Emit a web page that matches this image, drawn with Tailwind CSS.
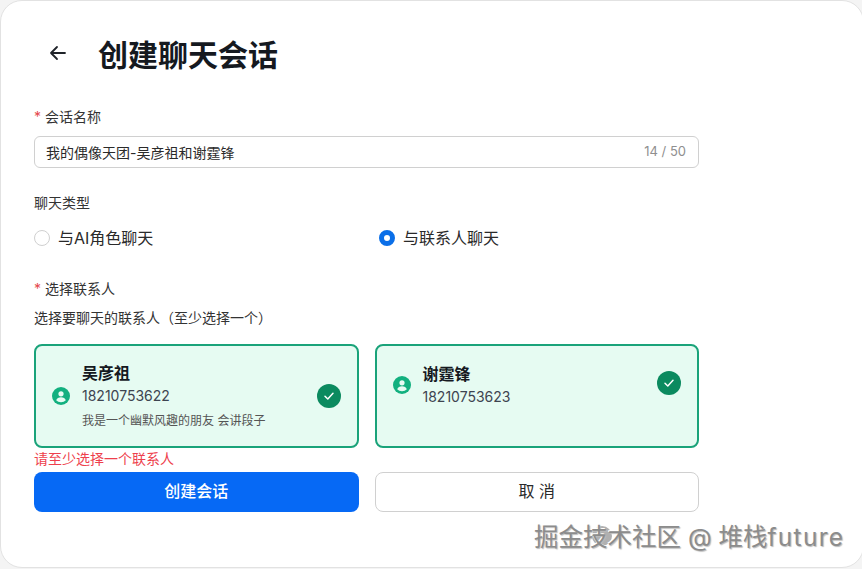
<!DOCTYPE html>
<html lang="zh-CN">
<head>
  <meta charset="UTF-8" />
  <title>创建聊天会话</title>
  <script src="https://cdn.jsdelivr.net/npm/@tailwindcss/browser@4"></script>
</head>
<body class="bg-[#f4f4f4] font-['Inter','Noto_Sans_CJK_SC',sans-serif]">
  <div class="relative h-[569px] w-[862px] overflow-hidden">
    <main class="h-[568px] w-[864px] rounded-[22px] border border-[#e2e2e2] bg-white pl-[33px] pt-[34px]">
      <header class="flex h-10 items-center">
        <svg class="ml-[15px] h-[18px] w-[18px] -translate-y-[2px] text-[#1f2329]" viewBox="0 0 18 18" fill="none" stroke="currentColor" stroke-width="1.8" stroke-linecap="round" stroke-linejoin="round">
          <path d="M16 9H2M8 3 2 9l6 6" />
        </svg>
        <h1 class="ml-[31px] text-[30px] font-bold leading-10 text-[#15191f]">创建聊天会话</h1>
      </header>

      <form class="mt-[31px] w-[665px]">
        <label class="flex h-5 items-center text-[14px] text-[#333]"><span class="mr-1 text-[#e5484d]">*</span>会话名称</label>
        <div class="mt-[10px] flex h-8 items-center justify-between rounded-md border border-[#d0d0d0] pl-[11px] pr-3 text-[14px]">
          <span class="text-[#2a2a2a]">我的偶像天团-吴彦祖和谢霆锋</span>
          <span class="text-[13px] text-[#8f8f8f]">14 / 50</span>
        </div>

        <div class="mt-[24px] flex h-5 items-center text-[14px] text-[#333]">聊天类型</div>
        <div class="mt-[14px] flex h-6 items-center text-[16px] text-[#2a2a2a]">
          <div class="flex w-[345px] items-center">
            <span class="h-4 w-4 rounded-full border border-[#d0d0d0]"></span>
            <span class="ml-2">与AI角色聊天</span>
          </div>
          <div class="flex items-center">
            <span class="h-4 w-4 rounded-full border-[5px] border-[#0b6fe8] bg-white"></span>
            <span class="ml-2">与联系人聊天</span>
          </div>
        </div>

        <label class="mt-[28px] flex h-5 items-center text-[14px] text-[#333]"><span class="mr-1 text-[#e5484d]">*</span>选择联系人</label>
        <p class="mt-[10px] h-5 text-[14px] leading-5 text-[#333]">选择要聊天的联系人（至少选择一个）</p>

        <div class="mt-[16px] grid grid-cols-2 gap-4">
          <div class="flex h-[104px] items-center rounded-lg border-2 border-[#1aa37a] bg-[#e6fbf2] pl-4 pr-[16px]">
            <svg class="h-[18px] w-[18px] shrink-0" viewBox="0 0 18 18">
              <circle cx="9" cy="9" r="9" fill="#12b07f" />
              <circle cx="9" cy="6.800" r="2.600" fill="#e6fbf2" />
              <path d="M4.200 13.200c.6-2 2.400-3 4.800-3s4.200 1 4.800 3c-1.200 1.300-2.900 2-4.800 2s-3.600-.7-4.800-2Z" fill="#e6fbf2" />
            </svg>
            <div class="ml-3 flex-1">
              <div class="text-[16px] font-semibold leading-[22px] text-[#15191f]">吴彦祖</div>
              <div class="mt-[2px] text-[14px] leading-5 text-[#3d4450]">18210753622</div>
              <div class="mt-[5px] text-[12px] leading-5 text-[#555]">我是一个幽默风趣的朋友 会讲段子</div>
            </div>
            <span class="flex h-6 w-6 items-center justify-center rounded-full bg-[#0b8a5f]">
              <svg class="h-3 w-3 text-white" viewBox="0 0 12 12" fill="none" stroke="currentColor" stroke-width="1.500" stroke-linecap="round" stroke-linejoin="round"><path d="M2 6.300 4.800 9 10 3.200" /></svg>
            </span>
          </div>
          <div class="flex h-[104px] items-start rounded-lg border-2 border-[#1aa37a] bg-[#e6fbf2] pl-4 pr-[16px] pt-[17px]">
            <svg class="mt-[13px] h-[18px] w-[18px] shrink-0" viewBox="0 0 18 18">
              <circle cx="9" cy="9" r="9" fill="#12b07f" />
              <circle cx="9" cy="6.800" r="2.600" fill="#e6fbf2" />
              <path d="M4.200 13.200c.6-2 2.400-3 4.800-3s4.200 1 4.800 3c-1.200 1.300-2.900 2-4.800 2s-3.600-.7-4.800-2Z" fill="#e6fbf2" />
            </svg>
            <div class="ml-3 flex-1">
              <div class="text-[16px] font-semibold leading-[22px] text-[#15191f]">谢霆锋</div>
              <div class="mt-[2px] text-[14px] leading-5 text-[#3d4450]">18210753623</div>
            </div>
            <span class="mt-[8px] flex h-6 w-6 items-center justify-center rounded-full bg-[#0b8a5f]">
              <svg class="h-3 w-3 text-white" viewBox="0 0 12 12" fill="none" stroke="currentColor" stroke-width="1.500" stroke-linecap="round" stroke-linejoin="round"><path d="M2 6.300 4.800 9 10 3.200" /></svg>
            </span>
          </div>
        </div>

        <p class="mt-px h-[23px] text-[14px] leading-5 text-[#ee3f4d]">请至少选择一个联系人</p>

        <div class="grid grid-cols-2 gap-4">
          <button type="button" class="h-10 rounded-lg bg-[#0669f5] pb-0.5 text-[16px] font-medium text-white">创建会话</button>
          <button type="button" class="h-10 rounded-lg border border-[#d0d0d0] bg-white pb-0.5 text-[16px] text-[#2a2a2a]">取 消</button>
        </div>
      </form>
    </main>

    <span class="absolute left-[592px] top-[526px] h-5 w-5 rounded-full bg-[#b0b0b0]"></span>
    <div class="absolute left-[534px] top-[520px] whitespace-nowrap text-[24.5px] leading-[34px] text-[#8c8c8c] [text-shadow:1px_1px_1px_#bbb,-1px_-1px_0_#fff]">掘金技术社区 @ 堆栈<span class="tracking-[1.3px]">future</span></div>
  </div>
</body>
</html>
